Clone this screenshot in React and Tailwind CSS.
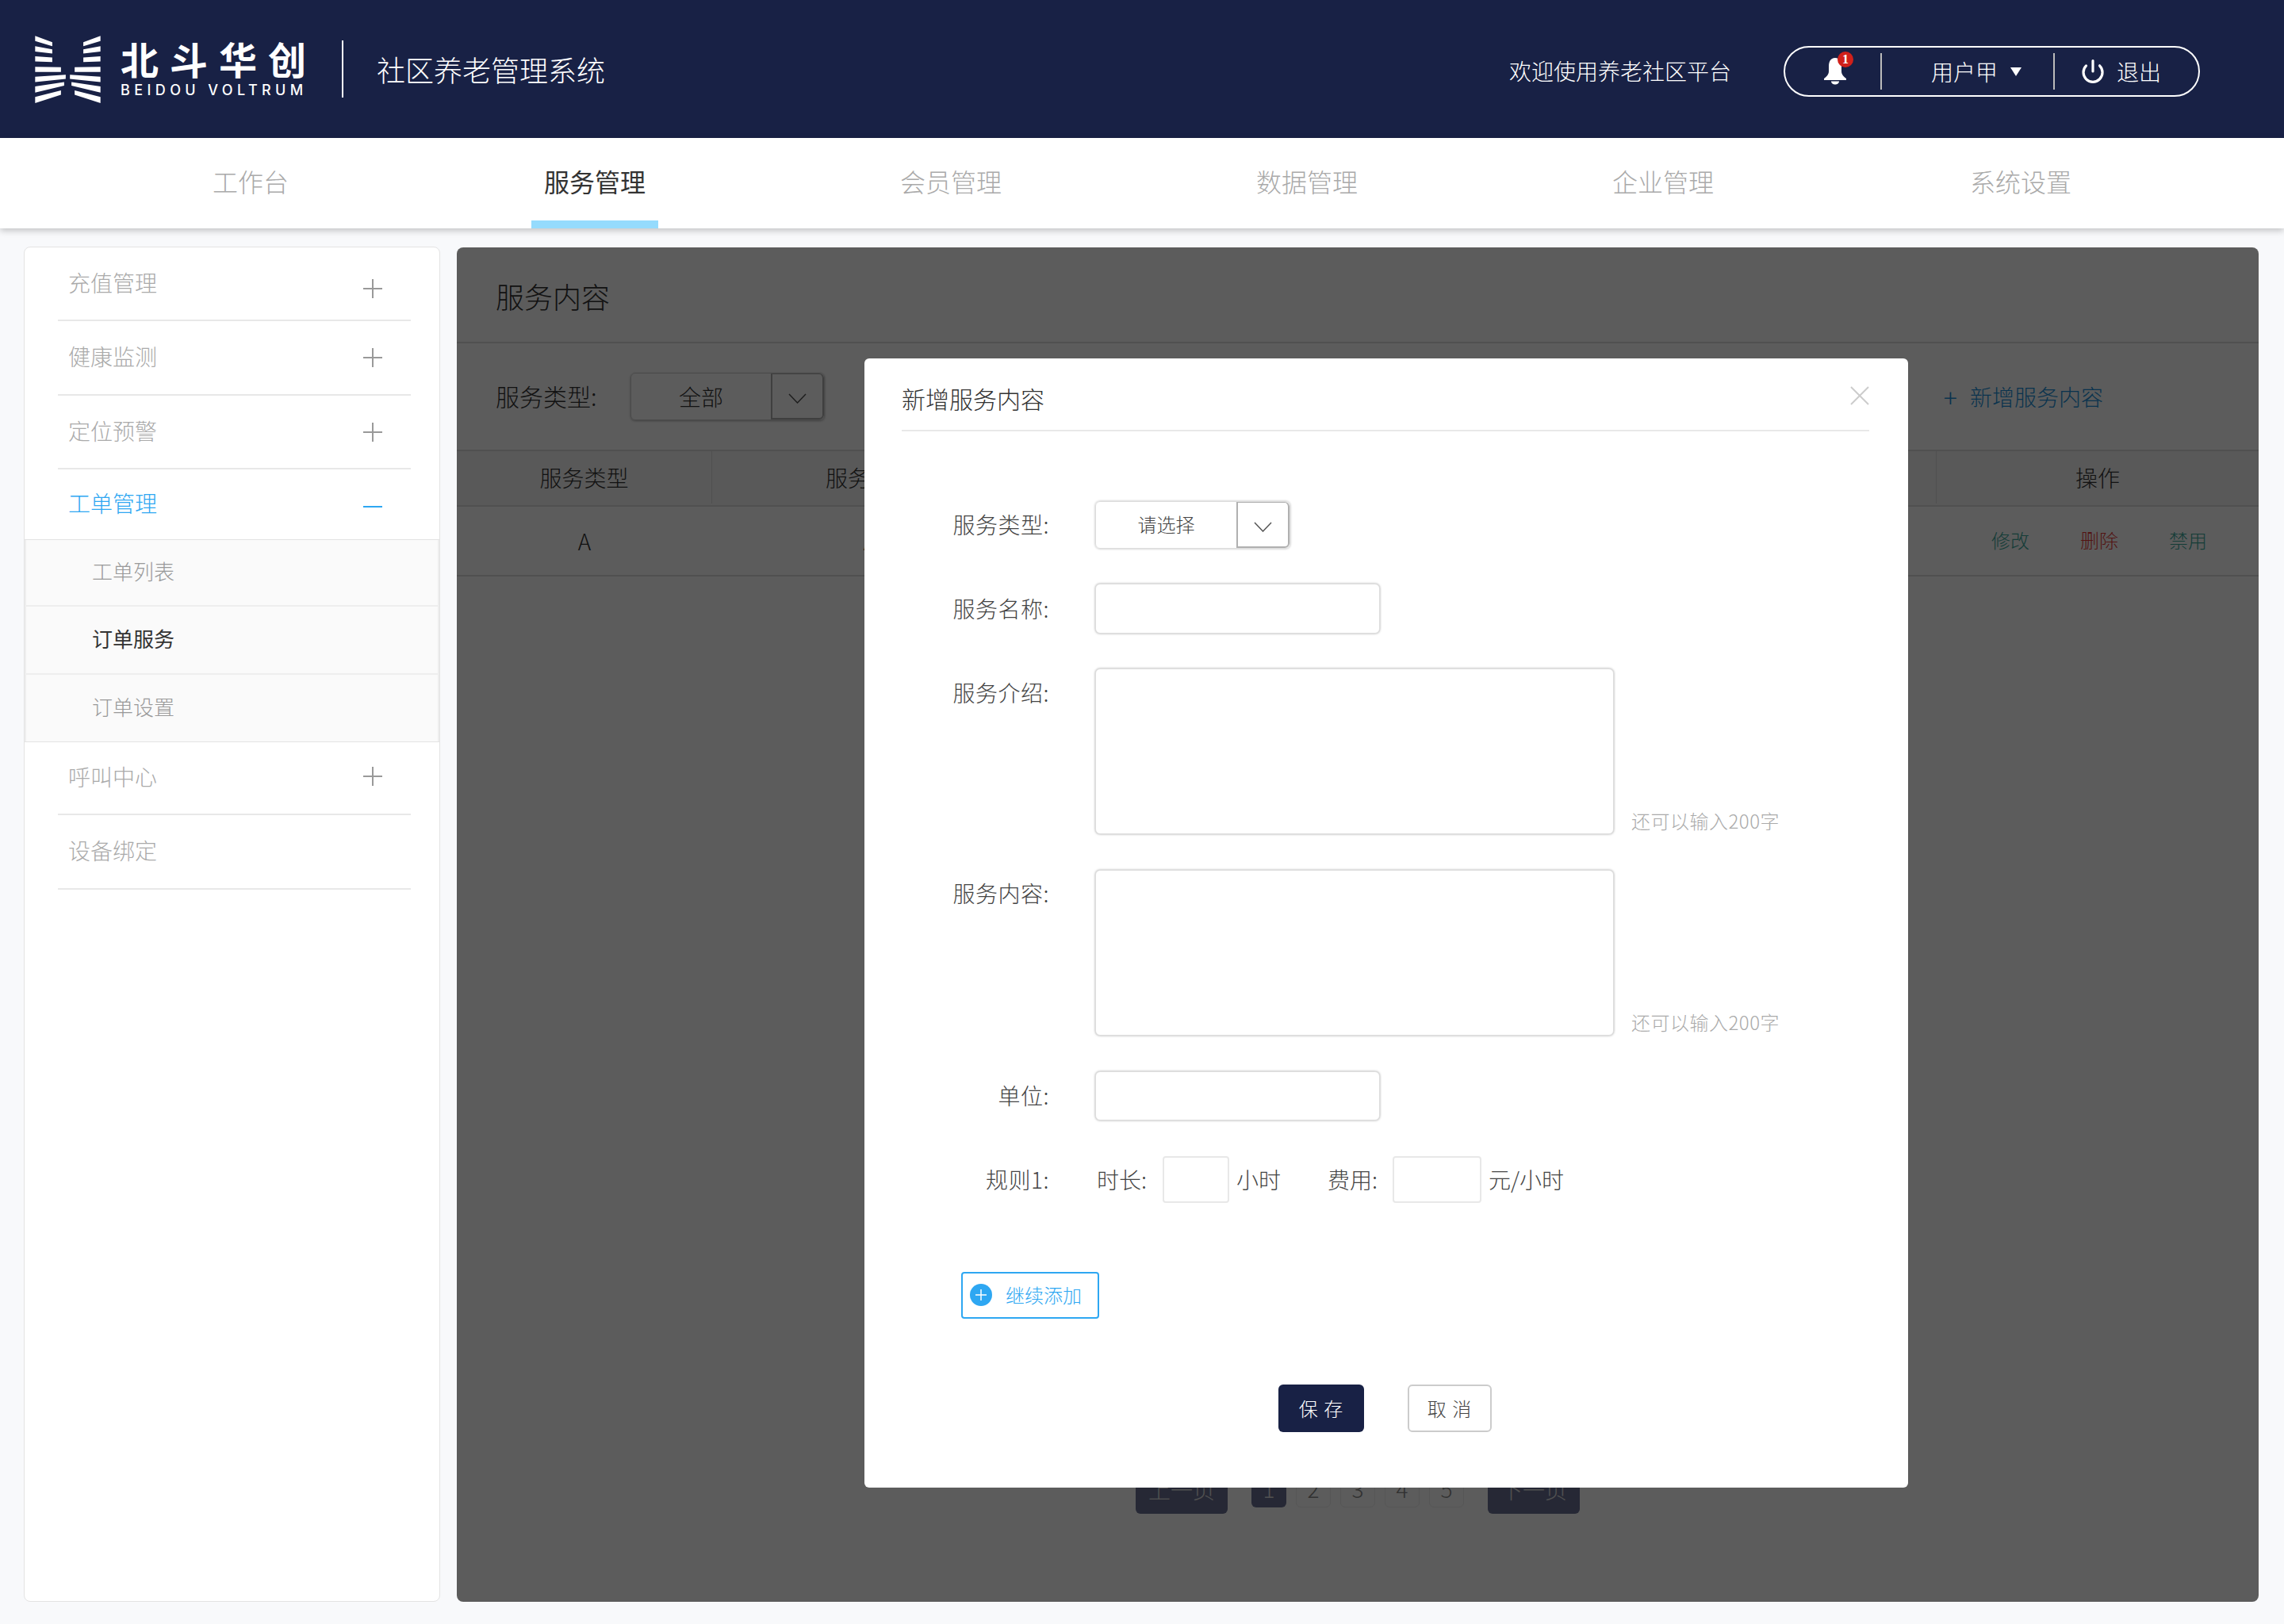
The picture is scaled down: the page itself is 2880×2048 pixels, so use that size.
import React from "react";
import { Power } from "lucide-react";

const font = { fontFamily: '"Noto Sans CJK SC", "Noto Sans", sans-serif' };

const navItems = ["工作台", "服务管理", "会员管理", "数据管理", "企业管理", "系统设置"];

const wing = [
  "72,73 137,97 137,112 72,92",
  "72,112 137,124 137,140 72,132",
  "72,150 137,155 137,172 72,170",
  "72,190 170,192 170,210 72,210",
  "72,228 188,220 188,236 72,248",
  "72,265 182,248 182,262 72,288",
  "72,305 170,280 170,296 72,328",
];

const LogoMark = () => (
  <svg width="83" height="85" viewBox="72 72 248 256" fill="#fff">
    {wing.map((p) => (
      <polygon key={p} points={p} />
    ))}
    <g transform="translate(392 0) scale(-1 1)">
      {wing.map((p) => (
        <polygon key={p} points={p} />
      ))}
    </g>
  </svg>
);

const Bell = () => (
  <svg width="28" height="34" viewBox="0 0 28 34" fill="#fff">
    <path d="M14 0C20 0 22 5 22 11V17C22 21 25 24 28 26V28H0V26C3 24 6 21 6 17V11C6 5 8 0 14 0Z" />
    <path d="M9 29.500h10c0 2.500-2.500 4-5 4s-5-1.500-5-4z" />
  </svg>
);

const PlusIcon = ({ className = "" }) => (
  <svg width="24" height="24" viewBox="0 0 24 24" className={className} stroke="#999" strokeWidth="2">
    <path d="M0 12h24M12 0v24" />
  </svg>
);

const Chevron = () => (
  <svg width="23" height="13" viewBox="0 0 23 13" fill="none" stroke="#555" strokeWidth="1.5" className="mt-[6px]">
    <path d="M1 1l10.500 11L22 1" />
  </svg>
);

// the arrow box of a select: heavier on the left, right and bottom
const SelectArrow = () => (
  <div className="flex-1 flex items-center justify-center border-l-2 border-r-2 border-b-2 border-t border-[#b0b0b0] rounded-r-md">
    <Chevron />
  </div>
);

const Header = () => (
  <header className="h-[174px] bg-[#182145] flex items-center pl-[44px] pr-[106px] text-white">
    <LogoMark />
    <div className="ml-[25px] w-[231px] flex flex-col -mt-[4px]">
      <div className="h-[54px] text-[48px] leading-[54px] font-bold tracking-[14px] whitespace-nowrap">北斗华创</div>
      <div className="mt-[4px] text-[18px] leading-[20px] font-medium tracking-[5.4px] whitespace-nowrap" style={{ fontFamily: "Inter, sans-serif" }}>
        BEIDOU VOLTRUM
      </div>
    </div>
    <div className="ml-[48px] w-[2px] h-[72px] bg-white" />
    <div className="ml-[42px] text-[36px] font-light leading-none">社区养老管理系统</div>
    <div className="ml-auto mt-[4px] text-[28px] font-light leading-none">欢迎使用养老社区平台</div>
    <div className="ml-[66px] mt-[6px] w-[525px] h-[64px] rounded-full border-2 border-white flex items-center text-[28px] font-light">
      <div className="relative w-[120px] flex justify-center pl-[6px]">
        <Bell />
        <span className="absolute left-[66px] -top-[8px] w-[20px] h-[20px] rounded-full bg-[#d0201a] text-[16px] leading-[20px] font-bold text-center" style={{ fontFamily: '"Liberation Serif", serif' }}>
          1
        </span>
      </div>
      <div className="w-[2px] h-[46px] bg-[#bbb]" />
      <div className="w-[216px] flex items-center pl-[62px]">
        <span>用户甲</span>
        <span className="ml-[16px] border-x-[7px] border-t-[11px] border-x-transparent border-t-white" />
      </div>
      <div className="w-[2px] h-[46px] bg-[#bbb]" />
      <div className="flex items-center pl-[32px] gap-[14px]">
        <Power size={32} strokeWidth={2.4} />
        <span>退出</span>
      </div>
    </div>
  </header>
);

const Nav = () => (
  <nav className="relative z-10 h-[114px] bg-white shadow-[0_3px_8px_rgba(0,0,0,0.22)] flex pl-[166px] gap-[149px]">
    {navItems.map((item, i) => (
      <div key={item} className={`relative w-[300px] flex items-center justify-center pb-[6px] text-[32px] font-light ${i === 0 ? "-mr-[15px]" : ""} ${i === 5 ? "ml-[2px]" : ""}`}>
        <span className={i === 1 ? "text-[#333] font-normal" : "text-[#aaa]"}>{item}</span>
        {i === 1 && <div className="absolute bottom-0 left-[70px] w-[160px] h-[10px] bg-[#95dbfd]" />}
      </div>
    ))}
  </nav>
);

const MenuRow = ({ label, height, icon, iconClass, noLine, active }) => (
  <div className={`ml-[42px] mr-[36px] pl-[13px] pr-[36px] flex items-center justify-between ${height} ${noLine ? "" : "border-b-2 border-[#e8e8e8]"}`}>
    <span className={`pb-[4px] text-[28px] font-light ${active ? "text-[#2ea7f2]" : "text-[#aaa]"}`}>{label}</span>
    {icon === "plus" && <PlusIcon className={iconClass} />}
    {icon === "minus" && <div className="w-[24px] h-[2px] bg-[#2ea7f2] mt-[6px]" />}
  </div>
);

const subItems = [
  { label: "工单列表", h: "h-[84px]" },
  { label: "订单服务", h: "h-[86px]", active: true },
  { label: "订单设置", h: "h-[84px]" },
];

const Sidebar = () => (
  <aside className="w-[525px] shrink-0 bg-white rounded-lg border border-[#e3e3e3]">
    <MenuRow label="充值管理" height="h-[93px]" icon="plus" iconClass="mt-[12px]" />
    <MenuRow label="健康监测" height="h-[94px]" icon="plus" />
    <MenuRow label="定位预警" height="h-[93px]" icon="plus" />
    <MenuRow label="工单管理" height="h-[88px]" icon="minus" noLine active />
    <div className="border-t border-b border-[#e3e3e3]">
      {subItems.map((s, i) => (
        <div key={s.label} className={`${s.h} flex items-center pl-[83px] pb-[5px] bg-[#fafafa] border-x-2 border-[#eee] ${i < 2 ? "border-b-2" : ""}`}>
          <span className={`text-[26px] font-light ${s.active ? "text-[#333] font-normal" : "text-[#999]"}`}>{s.label}</span>
        </div>
      ))}
    </div>
    <MenuRow label="呼叫中心" height="h-[92px]" icon="plus" iconClass="-mt-[4px]" />
    <MenuRow label="设备绑定" height="h-[94px]" />
  </aside>
);

const BackPanel = () => (
  <>
    <div className="h-[121px] border-b-2 border-[#ddd] flex items-center pl-[49px] pt-[3px] text-[36px] font-light text-[#333]">服务内容</div>
    <div className="h-[134px] flex items-center pl-[49px] pr-[196px] text-[#333]">
      <span className="w-[170px] pb-[2px] text-[30px] font-light">服务类型:</span>
      <div className="w-[245px] h-[60px] flex rounded-md border border-[#ccc] shadow-[0_1px_3px_rgba(0,0,0,0.3)]">
        <div className="w-[176px] flex items-center justify-center text-[28px] font-light">全部</div>
        <SelectArrow />
      </div>
      <div className="ml-auto flex items-center text-[28px] font-light text-[#1c8fd8]">
        <span className="mr-[16px] text-[32px] font-extralight">+</span>
        新增服务内容
      </div>
    </div>
    <div className="h-[72px] flex bg-[#f5f5f5] border-y-2 border-[#ddd] pb-[2px] text-[28px] font-light text-[#333]">
      <div className="w-[322px] flex items-center justify-center border-r border-[#ddd]">服务类型</div>
      <div className="w-[398px] flex items-center justify-center">服务名称</div>
      <div className="w-[1146px] border-r border-[#ddd]" />
      <div className="flex-1 flex items-center justify-center">操作</div>
    </div>
    <div className="h-[88px] flex items-center border-b-2 border-[#ddd] font-light text-[#333]">
      <div className="w-[322px] text-center text-[28px]">A</div>
      <div className="w-[398px] text-center text-[28px]">A</div>
      <div className="ml-[1215px] -mt-[2px] flex gap-[64px] text-[24px]">
        <span className="text-[#3aa89a]">修改</span>
        <span className="text-[#e53935]">删除</span>
        <span className="text-[#3aa89a]">禁用</span>
      </div>
    </div>
    <div className="mt-[1128px] ml-[856px] flex items-start text-[28px] font-light">
      <div className="w-[116px] h-[54px] pb-[8px] rounded-md bg-[#696f93] text-[#e0e0e0] flex items-center justify-center">上一页</div>
      <div className="ml-[30px] mt-[2px] w-[44px] h-[44px] pb-[4px] rounded-md bg-[#696f93] text-[#e0e0e0] flex items-center justify-center">1</div>
      {["2", "3", "4", "5"].map((n) => (
        <div key={n} className="ml-[12px] mt-[2px] w-[44px] h-[44px] pb-[4px] rounded-md border border-[#eee] text-[#888] flex items-center justify-center">{n}</div>
      ))}
      <div className="ml-[30px] w-[116px] h-[54px] pb-[8px] rounded-md bg-[#696f93] text-[#e0e0e0] flex items-center justify-center">下一页</div>
    </div>
  </>
);

const inputCls = "block rounded-md border border-[#ddd] bg-white shadow-[0_0_3px_rgba(0,0,0,0.35)] outline-none";

const Label = ({ children, className = "" }) => (
  <div className={`w-[186px] mr-[58px] pb-[2px] shrink-0 text-right text-[28px] font-light leading-[40px] tracking-[0.5px] text-[#444] ${className}`}>{children}</div>
);

const TextAreaRow = ({ label, className, labelClass }) => (
  <div className={`flex ${className}`}>
    <Label className={labelClass}>{label}</Label>
    <textarea className={`${inputCls} w-[654px] h-[209px] resize-none`} />
    <span className="self-end mb-[2px] ml-[22px] text-[24px] font-light leading-[30px] tracking-[0.5px] text-[#aaa]">还可以输入200字</span>
  </div>
);

const Modal = () => (
  <div className="w-[1316px] h-[1424px] bg-white rounded-md pl-[47px] pr-[49px]">
    <div className="h-[92px] border-b-2 border-[#e8e8e8] flex items-center justify-between pt-[10px]">
      <span className="text-[30px] font-light text-[#333]">新增服务内容</span>
      <svg width="24" height="24" viewBox="0 0 24 24" stroke="#ccc" strokeWidth="2" className="-mt-[6px]">
        <path d="M1 1l22 22M23 1L1 23" />
      </svg>
    </div>

    <div className="mt-[88px] flex items-center">
      <Label>服务类型:</Label>
      <div className="w-[246px] h-[60px] flex rounded-md border border-[#ddd] shadow-[0_0_3px_rgba(0,0,0,0.3)]">
        <div className="w-[177px] flex items-center justify-center pb-[2px] text-[24px] font-light text-[#444]">请选择</div>
        <SelectArrow />
      </div>
    </div>

    <div className="mt-[44px] flex items-center">
      <Label>服务名称:</Label>
      <input className={`${inputCls} w-[359px] h-[63px]`} />
    </div>

    <TextAreaRow label="服务介绍:" className="mt-[44px]" labelClass="pt-[10px]" />
    <TextAreaRow label="服务内容:" className="mt-[45px]" labelClass="pt-[9px]" />

    <div className="mt-[45px] flex items-center">
      <Label>单位:</Label>
      <input className={`${inputCls} w-[359px] h-[62px]`} />
    </div>

    <div className="mt-[45px] flex items-center text-[28px] font-light text-[#444]">
      <Label>规则1:</Label>
      <span className="ml-[2px] w-[83px] pb-[2px]">时长:</span>
      <input className="w-[84px] h-[59px] rounded border-2 border-[#e8e8e8] outline-none" />
      <span className="ml-[9px] w-[115px] pb-[2px]">小时</span>
      <span className="w-[82px] pb-[2px]">费用:</span>
      <input className="w-[112px] h-[59px] rounded border-2 border-[#e8e8e8] outline-none" />
      <span className="ml-[9px] pb-[2px]">元/小时</span>
    </div>

    <div className="mt-[87px] ml-[75px] w-[174px] h-[59px] pb-[1px] rounded border-2 border-[#2ea7f2] flex items-center pl-[9px] text-[24px] font-light text-[#2ea7f2]">
      <svg width="28" height="28" viewBox="0 0 28 28">
        <circle cx="14" cy="14" r="14" fill="#2ea7f2" />
        <path d="M14 7v14M7 14h14" stroke="#fff" strokeWidth="1.500" />
      </svg>
      <span className="ml-[17px]">继续添加</span>
    </div>

    <div className="mt-[83px] ml-[475px] flex gap-[55px] text-[24px] font-light tracking-[1px]">
      <div className="w-[108px] h-[60px] rounded-md bg-[#182145] text-white flex items-center justify-center">保 存</div>
      <div className="w-[106px] h-[60px] rounded-md border-2 border-[#ccc] text-[#444] flex items-center justify-center">取 消</div>
    </div>
  </div>
);

export default function App() {
  return (
    <div className="w-[2880px] h-[2048px] bg-[#f8f9fb] overflow-hidden" style={font}>
      <Header />
      <Nav />
      <div className="h-[1760px] flex pt-[23px] pb-[28px] pl-[30px] pr-[32px] gap-[21px]">
        <Sidebar />
        <main className="relative mt-[1px] flex-1 bg-white rounded-lg overflow-hidden">
          <BackPanel />
          <div className="absolute inset-0 bg-black/64 pl-[514px] pt-[140px]">
            <Modal />
          </div>
        </main>
      </div>
    </div>
  );
}
